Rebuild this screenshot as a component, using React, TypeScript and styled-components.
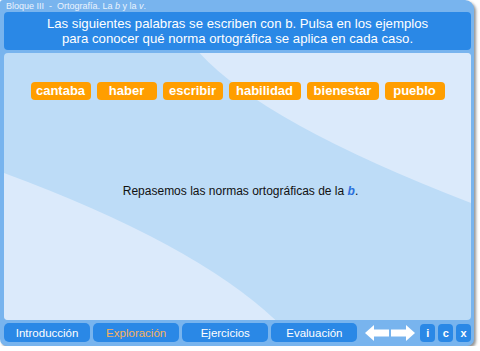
import React from 'react';
import styled, { createGlobalStyle } from 'styled-components';

const GlobalStyle = createGlobalStyle`
  html, body {
    margin: 0;
    padding: 0;
    background: #ffffff;
    font-family: "Liberation Sans", Arial, sans-serif;
  }
`;

const Frame = styled.div`
  width: 474px;
  height: 346px;
  box-sizing: border-box;
  padding: 0 3px 4px 4px;
  display: flex;
  flex-direction: column;
  background: #78b4ee;
  border-radius: 3px 9px 7px 7px;
  box-shadow: 2px 2px 3px rgba(60, 60, 60, 0.55);
`;

const TopBar = styled.div`
  height: 12px;
  display: flex;
  align-items: center;
  padding-left: 2px;
  font-size: 9px;
  color: #eaf3fd;
  white-space: pre;
  em {
    font-style: italic;
  }
`;

const Header = styled.div`
  height: 38px;
  display: flex;
  align-items: center;
  justify-content: center;
  text-align: center;
  background: #2a88e6;
  border-radius: 4px;
  color: #ffffff;
  font-size: 13.2px;
  line-height: 15px;
`;

const Panel = styled.div`
  position: relative;
  flex: 1;
  margin-top: 3px;
  background: #bddcf7;
  border-radius: 4px;
  overflow: hidden;
`;

const Waves = styled.svg`
  position: absolute;
  inset: 0;
  width: 100%;
  height: 100%;
`;

const PanelBody = styled.div`
  position: relative;
  display: flex;
  flex-direction: column;
  align-items: center;
  padding-top: 29px;
`;

const WordRow = styled.div`
  display: flex;
  gap: 6px;
`;

const Word = styled.button<{ $wide?: boolean }>`
  width: ${({ $wide }) => ($wide ? '72px' : '60px')};
  height: 18px;
  padding: 0;
  border: none;
  border-radius: 4px;
  background: #ff9e00;
  color: #ffffff;
  font-family: "Liberation Sans", Arial, sans-serif;
  font-weight: bold;
  font-size: 13px;
  line-height: 18px;
  cursor: pointer;
`;

const Intro = styled.p`
  margin: 84px 0 0 6px;
  font-size: 12px;
  color: #111111;
  b {
    color: #2a6fdc;
    font-style: italic;
  }
`;

const Nav = styled.div`
  height: 19px;
  margin-top: 3px;
  display: flex;
  align-items: center;
  gap: 3px;
`;

const Tab = styled.button<{ $active?: boolean }>`
  width: 87px;
  height: 19px;
  padding: 0;
  border: none;
  border-radius: 5px;
  background: #2a88e6;
  color: ${({ $active }) => ($active ? '#f7b25e' : '#ffffff')};
  font-family: "Liberation Sans", Arial, sans-serif;
  font-size: 11.5px;
  cursor: pointer;
`;

const Arrows = styled.svg`
  margin: 0 2px 0 5px;
  flex: none;
`;

const SmallButton = styled.button`
  width: 15px;
  height: 18px;
  padding: 0;
  border: none;
  border-radius: 4px;
  background: #2a88e6;
  color: #ffffff;
  font-family: "Liberation Sans", Arial, sans-serif;
  font-weight: bold;
  font-size: 11px;
  cursor: pointer;
`;

const words: { text: string; wide?: boolean }[] = [
  { text: 'cantaba' },
  { text: 'haber' },
  { text: 'escribir' },
  { text: 'habilidad', wide: true },
  { text: 'bienestar', wide: true },
  { text: 'pueblo' },
];

const tabs = ['Introducción', 'Exploración', 'Ejercicios', 'Evaluación'];

const App = () => (
  <>
    <GlobalStyle />
    <Frame>
      <TopBar>
        Bloque III  -  Ortografía. La <em>b</em> y la <em>v</em>.
      </TopBar>
      <Header>
        Las siguientes palabras se escriben con b. Pulsa en los ejemplos
        <br />
        para conocer qué norma ortográfica se aplica en cada caso.
      </Header>
      <Panel>
        <Waves viewBox="0 0 468 267" preserveAspectRatio="none">
          <path d="M196 0 Q 260 70 468 150 L468 0 Z" fill="#dbeafb" />
          <path d="M0 120 Q 190 190 272 267 L0 267 Z" fill="#dbeafb" />
        </Waves>
        <PanelBody>
          <WordRow>
            {words.map((w) => (
              <Word key={w.text} $wide={w.wide}>
                {w.text}
              </Word>
            ))}
          </WordRow>
          <Intro>
            Repasemos las normas ortográficas de la <b>b</b>.
          </Intro>
        </PanelBody>
      </Panel>
      <Nav>
        {tabs.map((t) => (
          <Tab key={t} $active={t === 'Exploración'}>
            {t}
          </Tab>
        ))}
        <Arrows width="50" height="18" viewBox="0 0 50 18">
          <path d="M0 9 L9 1 L9 5.5 L24 5.5 L24 12.5 L9 12.5 L9 17 Z" fill="#ffffff" />
          <path d="M50 9 L41 1 L41 5.5 L26 5.5 L26 12.5 L41 12.5 L41 17 Z" fill="#ffffff" />
        </Arrows>
        <SmallButton>i</SmallButton>
        <SmallButton>c</SmallButton>
        <SmallButton>x</SmallButton>
      </Nav>
    </Frame>
  </>
);

export default App;
